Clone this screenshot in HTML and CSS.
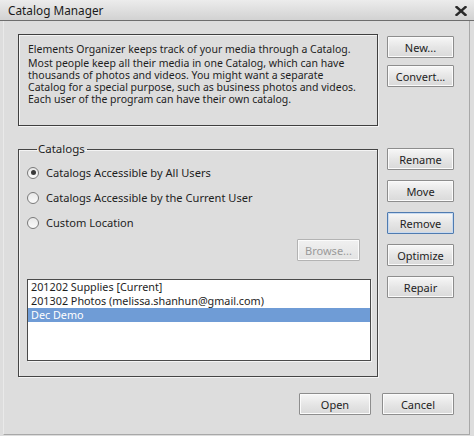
FILE: index.html
```html
<!DOCTYPE html>
<html>
<head>
<meta charset="utf-8">
<link rel="stylesheet" href="styles.css">
</head>
<body>
<div class="window">
  <div class="titlebar">
    <span class="title">Catalog Manager</span>
    <svg class="close" width="12" height="10" viewBox="0 0 12 10"><path d="M1.5 1 L10.5 9 M10.5 1 L1.5 9" stroke="#2a2a2a" stroke-width="2.4" stroke-linecap="square"/></svg>
  </div>
  <div class="content">
    <div class="info">
      <p class="p1">Elements Organizer keeps track of your media through a Catalog.</p>
      <p>Most people keep all their media in one Catalog, which can have thousands of photos and videos. You might want a separate Catalog for a special purpose, such as business photos and videos. Each user of the program can have their own catalog.</p>
    </div>
    <div class="btncol top">
      <button class="btn">New...</button>
      <button class="btn">Convert...</button>
    </div>
    <fieldset class="group">
      <legend>Catalogs</legend>
      <label class="radio"><span class="dot checked"></span>Catalogs Accessible by All Users</label>
      <label class="radio"><span class="dot"></span>Catalogs Accessible by the Current User</label>
      <label class="radio"><span class="dot"></span>Custom Location</label>
      <div class="browse-row"><button class="btn disabled browse">Browse...</button></div>
      <div class="list">
        <div class="item">201202 Supplies [Current]</div>
        <div class="item">201302 Photos (melissa.shanhun@gmail.com)</div>
        <div class="item selected">Dec Demo</div>
      </div>
    </fieldset>
    <div class="btncol side">
      <button class="btn">Rename</button>
      <button class="btn">Move</button>
      <button class="btn focus">Remove</button>
      <button class="btn">Optimize</button>
      <button class="btn">Repair</button>
    </div>
    <div class="footer">
      <button class="btn wide">Open</button>
      <button class="btn wide">Cancel</button>
    </div>
  </div>
</div>
</body>
</html>
```
FILE: styles.css
```css
* { box-sizing: border-box; }
html, body { margin: 0; padding: 0; }
body {
  background: #dcdcdc;
  font-family: "Noto Sans", "Open Sans", sans-serif;
  font-size: 11px;
  color: #1e1e1e;
  width: 474px;
  height: 436px;
  overflow: hidden;
}
.window {
  width: 474px;
  height: 436px;
  background: #dddddd;
}
.titlebar {
  height: 21px;
  background: linear-gradient(#ececec, #d2d2d2);
  border-bottom: 1px solid #6e6e6e;
  display: flex;
  align-items: center;
  justify-content: space-between;
  padding: 0 7px 0 8px;
}
.title {
  font-size: 11.8px;
  color: #1a1a1a;
}
.close { display: block; margin-top: 1px; }
.content {
  margin: 0 4px 0 3px;
  border-left: 1px solid #e9e9e9;
  border-right: 1px solid #a8a8a8;
  border-bottom: 1px solid #a8a8a8;
  height: 414px;
  padding: 13px 0 0 14px;
  display: grid;
  grid-template-columns: 360px 67px;
  grid-template-rows: 92px 235px auto;
  column-gap: 9px;
  row-gap: 16px;
  align-content: start;
}
.info {
  border: 1px solid #3f3f3f;
  box-shadow: inset 1px 1px 0 #f4f4f4, 1px 1px 0 #f4f4f4;
  padding: 9px 16px 0 9px;
  font-size: 10.5px;
  line-height: 11.9px;
}
.info p { margin: 0; }
.info .p1 { margin-bottom: 2px; }
.btncol {
  display: flex;
  flex-direction: column;
}
.btncol.top { gap: 7px; padding-top: 2px; }
.btncol.side { gap: 10px; padding-top: 6px; }
.btn {
  font-family: inherit;
  font-size: 11px;
  color: #1e1e1e;
  height: 22px;
  width: 67px;
  padding: 0;
  border: 1px solid #8d8d8d;
  border-radius: 1px;
  background: linear-gradient(#f7f7f7, #e6e6e6 50%, #d9d9d9);
  box-shadow: inset 0 0 0 1px #fbfbfb;
}
.btn.focus { border-color: #4f7bb0; box-shadow: inset 0 0 0 1px #c8daf0; }
.btn.disabled { color: #9a9a9a; border-color: #b3b3b3; background: linear-gradient(#f0f0f0, #e3e3e3); }
.btn.wide { width: 72px; }
.group {
  margin: 0;
  border: 1px solid #454545;
  box-shadow: 1px 1px 0 #f4f4f4, inset 1px 1px 0 #f4f4f4;
  padding: 4px 6px 14px 8px;
  min-width: 0;
}
.group legend {
  padding: 0 2px 0 1px;
  margin-left: 10px;
  font-size: 11.5px;
  line-height: 14px;
}
.radio {
  display: flex;
  align-items: center;
  height: 25px;
  font-size: 11.1px;
}
.dot {
  width: 12px;
  height: 12px;
  border-radius: 50%;
  border: 1px solid #7a7a7a;
  background: linear-gradient(#e8e8e8, #fafafa);
  margin-right: 7px;
  position: relative;
  flex: none;
}
.dot.checked::after {
  content: "";
  position: absolute;
  left: 2.5px; top: 2.5px;
  width: 5px; height: 5px;
  border-radius: 50%;
  background: #3a3a3a;
}
.browse-row {
  display: flex;
  justify-content: flex-end;
  padding-right: 11px;
  margin-top: 4px;
}
.browse { width: 63px; height: 22px; }
.list {
  margin-top: 18px;
  height: 82px;
  background: #ffffff;
  border: 1px solid #4a4a4a;
  box-shadow: 1px 1px 0 #f4f4f4;
  font-size: 10.8px;
}
.item {
  height: 14px;
  line-height: 14px;
  padding-left: 3px;
  white-space: nowrap;
}
.item.selected {
  background: #6f9cd6;
  color: #ffffff;
}
.footer {
  grid-column: 1 / 3;
  display: flex;
  justify-content: flex-end;
  gap: 11px;
}
```
